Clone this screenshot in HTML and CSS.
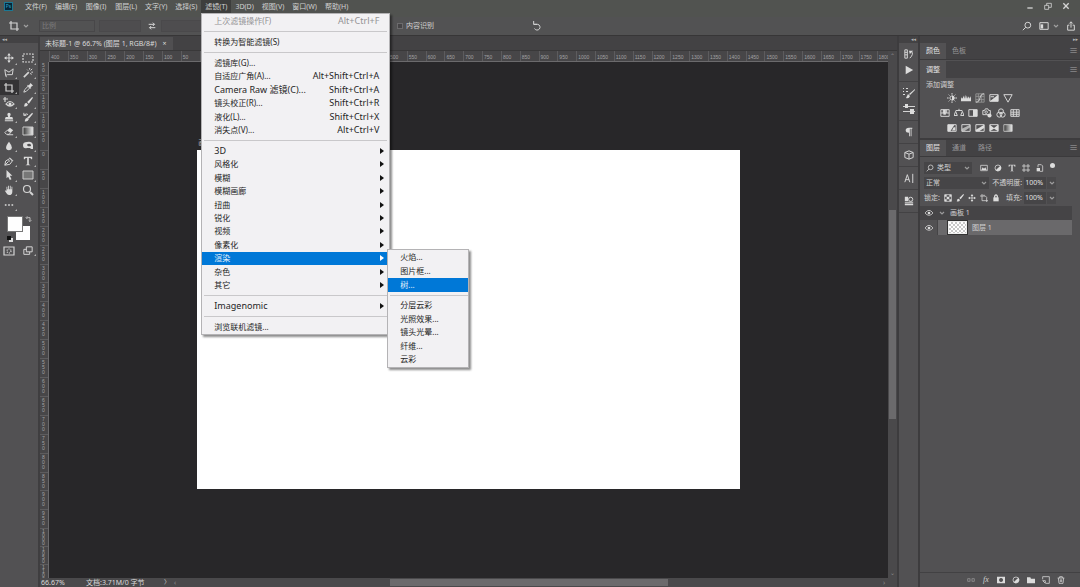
FILE: index.html
```html
<!DOCTYPE html>
<html lang="zh-CN">
<head>
<meta charset="utf-8">
<title>未标题-1</title>
<link rel="stylesheet" href="styles.css">
</head>
<body>
<svg class="sprite" aria-hidden="true">
  <symbol id="crop" viewBox="0 0 12 12"><path class="s" d="M3 1v8h8M1 3h8v8"/></symbol>
  <symbol id="chev" viewBox="0 0 6 6"><path class="s" d="M1 2l2 2 2-2"/></symbol>
  <symbol id="swap" viewBox="0 0 12 12"><path class="s" d="M2 4h7M7 2l2 2-2 2M10 8H3M5 6L3 8l2 2"/></symbol>
  <symbol id="undo" viewBox="0 0 12 12"><path class="s" d="M2 4h5a3.500 3.500 0 1 1-4 5M2 0v4h4"/></symbol>
  <symbol id="search" viewBox="0 0 12 12"><circle class="s" cx="7" cy="5" r="3.5"/><path class="s" d="M4.500 7.500L1 11"/></symbol>
  <symbol id="space" viewBox="0 0 12 12"><path class="s" d="M1 2h10v8H1z"/><path class="f" d="M2 4h3v5H2z"/></symbol>
  <symbol id="share" viewBox="0 0 12 12"><path class="s" d="M4 5H2v6h8V5H8M6 8V1M4 3l2-2 2 2"/></symbol>
  <symbol id="move" viewBox="0 0 12 12"><path class="s" d="M6 2v8M2 6h8"/><path class="f" d="M6 0l2 3H4zM6 12l2-3H4zM0 6l3-2v4zM12 6L9 4v4z"/></symbol>
  <symbol id="marquee" viewBox="0 0 12 12"><path class="s" stroke-dasharray="2 1" d="M1 2h10v8H1z"/></symbol>
  <symbol id="lasso" viewBox="0 0 12 12"><path class="s" d="M2 9L1 2l5 3 5-4-1 7H4l-2 1 1 2"/></symbol>
  <symbol id="wand" viewBox="0 0 12 12"><path class="b" d="M1 11l6-6"/><path class="s" d="M8 0v2M5 2l1 1M11 1L9 3M12 5h-2M9 6l1 2"/></symbol>
  <symbol id="dropper" viewBox="0 0 12 12"><path class="s" d="M1 11l1-3 4-4 2 2-4 4z"/><path class="f" d="M5 3l1-1 1 1 2-3 3 3-3 2 1 1-1 1z"/></symbol>
  <symbol id="heal" viewBox="0 0 12 12"><path class="s" d="M2 1v5M0 3h5M3 8q4-5 8 0-4 4-8 0z"/><circle class="f" cx="7" cy="8" r="1.500"/></symbol>
  <symbol id="brush" viewBox="0 0 12 12"><path class="f" d="M11 0l1 1-5 7-2-2zM4 7l2 2q-1 3-5 2 1-1 1-3z"/></symbol>
  <symbol id="stamp" viewBox="0 0 12 12"><path class="f" d="M6 1a2 2 0 0 1 2 2L7 6h3l1 3H1l1-3h3L4 3a2 2 0 0 1 2-2zM1 10h10v1H1z"/></symbol>
  <symbol id="history" viewBox="0 0 12 12"><path class="f" d="M11 1l1 1-5 6-2-1zM5 7l2 2q-2 3-5 2l1-3z"/><path class="s" d="M1 4q3-3 5-1M1 1v3h3"/></symbol>
  <symbol id="eraser" viewBox="0 0 12 12"><path class="f" d="M7 2l4 3-3 3-4-3z"/><path class="s" d="M4 5l4 3-2 2H3L1 8zM4 10.500h7"/></symbol>
  <symbol id="gradient" viewBox="0 0 12 12"><linearGradient id="lg"><stop stop-color="#333"/><stop offset="1" stop-color="#eee"/></linearGradient><path fill="url(#lg)" stroke="#ccc" d="M1 2h10v8H1z"/></symbol>
  <symbol id="drop" viewBox="0 0 12 12"><path class="f" d="M6 1q7 9 0 10-7-1 0-10z"/></symbol>
  <symbol id="dodge" viewBox="0 0 12 12"><path class="f" fill-rule="evenodd" d="M5 2q5-1 6 3v4H9L8 8H5Q1 9 1 5q0-3 4-3zM6 4a2 1 0 1 0 3 2 2 2 0 0 0-3-2z"/></symbol>
  <symbol id="pen" viewBox="0 0 12 12"><path class="s" d="M1 11l1-5 5-3 3 3-3 4zM7 2l4 4M1 11l4-4"/><circle class="f" cx="6" cy="6" r="1"/></symbol>
  <symbol id="type" viewBox="0 0 12 12"><path class="f" d="M1 1h10v3h-1q0-2-3-2v8l2 1H3l2-1V2Q2 2 2 4H1z"/></symbol>
  <symbol id="arrow" viewBox="0 0 12 12"><path class="f" d="M3 0l7 7H7l2 4-2 1-2-4-2 2z"/></symbol>
  <symbol id="rect" viewBox="0 0 12 12"><path fill="#777" stroke="#ccc" d="M1 2h10v8H1z"/></symbol>
  <symbol id="hand" viewBox="0 0 12 12"><path class="f" d="M3 7V2h1v3h1V1h1v4h1V1h1v4h1V2h1v6q0 4-4 4-2 0-3-2L1 7q0-1 2 0z"/></symbol>
  <symbol id="zoom" viewBox="0 0 12 12"><circle class="s" cx="5" cy="5" r="3.500"/><path class="b" d="M8 8l3 3"/></symbol>
  <symbol id="dots" viewBox="0 0 12 12"><path class="f" d="M1 5h2v2H1zM5 5h2v2H5zM9 5h2v2H9z"/></symbol>
  <symbol id="mask" viewBox="0 0 12 12"><path class="s" d="M1 2h10v8H1z"/><circle class="s" cx="6" cy="6" r="2" stroke-dasharray="1 1"/></symbol>
  <symbol id="screen" viewBox="0 0 12 12"><path class="s" d="M4 1h7v6H4zM4 4H1v6h7V7"/></symbol>
  <symbol id="corner" viewBox="0 0 12 12"><path class="s" d="M4 4h5v5M5 2L3 4l2 2M7 8l2 2 2-2"/></symbol>
  <symbol id="hist2" viewBox="0 0 12 12"><path class="s" d="M1 1h3v10H1zM1 4h3M1 7h3M7 11q5-5 2-8"/><path class="f" d="M6 2h5L7 6z"/></symbol>
  <symbol id="play" viewBox="0 0 12 12"><path class="f" d="M2 1l9 5-9 5z"/></symbol>
  <symbol id="brushes" viewBox="0 0 12 12"><path class="f" d="M12 2v1L7 8 6 7zM5 7l2 2q-1 3-4 2zM0 1h1v1H0zM3 1h2v1H3zM0 4h1v1H0zM3 4h2v1H3zM0 7h2v1H0z"/></symbol>
  <symbol id="sliders" viewBox="0 0 12 12"><path class="s" d="M0 3.500h12M0 8.500h12"/><path class="f" d="M2 1h3v4H2zM7 6h4v5H7z"/></symbol>
  <symbol id="para" viewBox="0 0 12 12"><path class="f" d="M10 1v1H9v9H8V2H7v9H6V7Q2 7 2 4t4-3z"/></symbol>
  <symbol id="cube" viewBox="0 0 12 12"><path class="s" d="M6 1l5 2v6l-5 2-5-2V3zM1 3l5 2 5-2M6 5v6"/></symbol>
  <symbol id="char" viewBox="0 0 12 12"><path class="s" d="M1 11l3-9 3 9M2 8h4M10.500 1v11"/></symbol>
  <symbol id="lib" viewBox="0 0 12 12"><path class="f" d="M1 1h4v5H1zM1 9h10v2H1z"/><circle class="s" cx="8" cy="4" r="2.500"/><path class="s" d="M1 7.500h10"/></symbol>
  <symbol id="sun" viewBox="0 0 12 12"><circle class="s" cx="6" cy="6" r="2.500"/><path class="f" d="M6 3a3 3 0 0 1 0 6z"/><path class="s" d="M6 0v2M6 10v2M0 6h2M10 6h2M2 2l1 1M9 9l1 1M10 2L9 3M3 9l-1 1"/></symbol>
  <symbol id="levels" viewBox="0 0 12 12"><path class="f" d="M0 10V7l1-2 1 2 1-4 1 4 1-5 1 5 1-4 1 4 1-3 1 3 1-3 1 2v4z"/></symbol>
  <symbol id="curves" viewBox="0 0 12 12"><path class="t" d="M1 1h10v10H1zM4 1v10M8 1v10M1 4h10M1 8h10"/><path class="s" d="M1 11q4 0 5-5t5-5"/></symbol>
  <symbol id="expo" viewBox="0 0 12 12"><path class="s" d="M1 2h10v8H1z"/><path class="f" d="M11 2v8H1zM2 4h4v1H2z"/></symbol>
  <symbol id="vib" viewBox="0 0 12 12"><path class="s" d="M1 2h10l-5 9z"/></symbol>
  <symbol id="hue" viewBox="0 0 12 12"><path class="s" d="M1 2h10v8H1zM1 6h10M4 2v4M8 2v4"/><path class="f" d="M4 2h3v6H4z"/></symbol>
  <symbol id="balance" viewBox="0 0 12 12"><path class="s" d="M6 1v2M2 3h8M0 9l2-5 2 5zM8 9l2-5 2 5z"/></symbol>
  <symbol id="bw" viewBox="0 0 12 12"><path class="s" d="M1 2h10v8H1z"/><path class="f" d="M6 2h5v8H6z"/></symbol>
  <symbol id="photo" viewBox="0 0 12 12"><path class="s" d="M1 3h2l1-2h3l1 2h2v5H1z"/><circle class="s" cx="5" cy="5" r="1.500"/><circle class="f" cx="9" cy="9" r="2.500"/></symbol>
  <symbol id="mixer" viewBox="0 0 12 12"><circle class="s" cx="6" cy="4" r="3"/><circle class="s" cx="4" cy="8" r="3"/><circle class="s" cx="8" cy="8" r="3"/></symbol>
  <symbol id="lut" viewBox="0 0 12 12"><path class="s" d="M1 2h10v8H1zM4 2v8M8 2v8M1 5h10M1 7.500h10"/></symbol>
  <symbol id="invert" viewBox="0 0 12 12"><path class="s" d="M1 2h10v8H1z"/><path class="f" d="M1 2h8L4 10H1zM8 5h2v4H6z"/></symbol>
  <symbol id="poster" viewBox="0 0 12 12"><path class="s" d="M1 2h10v8H1z"/><path class="f" opacity=".7" d="M1 7l10-5v3L4 10H1z"/></symbol>
  <symbol id="thresh" viewBox="0 0 12 12"><path class="s" d="M1 2h10v8H1z"/><path class="f" d="M1 8l10-6v4L5 10H1z"/></symbol>
  <symbol id="select" viewBox="0 0 12 12"><path class="s" d="M1 2h10v8H1z"/><path class="f" d="M1 2l5 4 5-4v8L6 7l-5 3z"/></symbol>
  <symbol id="image" viewBox="0 0 12 12"><path class="s" d="M1 2h10v8H1z"/><path class="f" d="M2 9l2-4 2 2 2-2 2 4z"/></symbol>
  <symbol id="half" viewBox="0 0 12 12"><circle class="s" cx="6" cy="6" r="4.500"/><path class="f" d="M9.500 2.500a5 5 0 0 1-7 7z"/></symbol>
  <symbol id="shape" viewBox="0 0 12 12"><path class="s" d="M3 0v12M9 0v12M0 3h12M0 9h12"/></symbol>
  <symbol id="smart" viewBox="0 0 12 12"><path class="s" d="M3 5V1h5l2 2v8H6"/><path class="f" d="M1 6h5v5H1z"/></symbol>
  <symbol id="checker" viewBox="0 0 12 12"><path class="s" d="M1 1h10v10H1z"/><path class="f" d="M1 1h3v3H1zM8 1h3v3H8zM4 4h4v4H4zM1 8h3v3H1zM8 8h3v3H8z"/></symbol>
  <symbol id="board" viewBox="0 0 12 12"><path class="s" d="M3 0v10h9M0 3h8l2 2v7M6 3V1"/></symbol>
  <symbol id="lock" viewBox="0 0 12 12"><path class="f" d="M2 5h8v6H2z"/><path class="b" d="M4 6V3q2-3 4 0v3"/></symbol>
  <symbol id="eye" viewBox="0 0 12 12"><path class="s" d="M0 6q6-8 12 0-6 7-12 0z"/><circle class="f" cx="6" cy="6" r="2"/></symbol>
  <symbol id="link" viewBox="0 0 12 12"><path class="s" d="M5 4H1v4h4M7 4h4v4H7M3 6h6"/></symbol>
  <symbol id="addmask" viewBox="0 0 12 12"><path class="f" fill-rule="evenodd" d="M0 1h12v10H0zM6 3a3 3 0 1 0 .1 0z"/></symbol>
  <symbol id="folder" viewBox="0 0 12 12"><path class="f" d="M0 2h5l1 2h6v7H0z"/></symbol>
  <symbol id="new" viewBox="0 0 12 12"><path class="s" d="M1 5V1h10v10H6M1 7h4v4z"/></symbol>
  <symbol id="trash" viewBox="0 0 12 12"><path class="s" d="M1 3h10M4 3V1h4v2M2 3l1 8h6l1-8M5 5v4M7 5v4"/></symbol>
  <symbol id="min" viewBox="0 0 12 12"><path class="b" d="M2 9h8"/></symbol>
  <symbol id="restore" viewBox="0 0 12 12"><path class="s" d="M1 5h6v6H1zM4 5V2h7v6H7"/></symbol>
  <symbol id="close" viewBox="0 0 12 12"><path class="b" d="M2 2l8 8M10 2l-8 8"/></symbol>
</svg>

<header class="menubar">
  <span class="logo">Ps</span>
  <nav class="menus">
    <button class="menu">文件(F)</button>
    <button class="menu">编辑(E)</button>
    <button class="menu">图像(I)</button>
    <button class="menu">图层(L)</button>
    <button class="menu">文字(Y)</button>
    <button class="menu">选择(S)</button>
    <div class="menu-open">
      <button class="menu on">滤镜(T)</button>
      <div class="dropdown">
        <div class="group"><button class="item disabled" disabled>上次滤镜操作(F)<kbd>Alt+Ctrl+F</kbd></button></div>
        <div class="group"><button class="item">转换为智能滤镜(S)</button></div>
        <div class="group six">
          <button class="item">滤镜库(G)...</button>
          <button class="item">自适应广角(A)...<kbd>Alt+Shift+Ctrl+A</kbd></button>
          <button class="item latin">Camera Raw 滤镜(C)...<kbd>Shift+Ctrl+A</kbd></button>
          <button class="item">镜头校正(R)...<kbd>Shift+Ctrl+R</kbd></button>
          <button class="item">液化(L)...<kbd>Shift+Ctrl+X</kbd></button>
          <button class="item">消失点(V)...<kbd>Alt+Ctrl+V</kbd></button>
        </div>
        <div class="group eleven">
          <button class="item more latin">3D</button>
          <button class="item more">风格化</button>
          <button class="item more">模糊</button>
          <button class="item more">模糊画廊</button>
          <button class="item more">扭曲</button>
          <button class="item more">锐化</button>
          <button class="item more">视频</button>
          <button class="item more">像素化</button>
          <div class="parent">
            <button class="item more chosen">渲染</button>
            <div class="dropdown submenu">
              <div class="group three">
                <button class="item">火焰...</button>
                <button class="item">图片框...</button>
                <button class="item chosen">树...</button>
              </div>
              <div class="group five">
                <button class="item">分层云彩</button>
                <button class="item">光照效果...</button>
                <button class="item">镜头光晕...</button>
                <button class="item">纤维...</button>
                <button class="item">云彩</button>
              </div>
            </div>
          </div>
          <button class="item more">杂色</button>
          <button class="item more">其它</button>
        </div>
        <div class="group"><button class="item more latin">Imagenomic</button></div>
        <div class="group"><button class="item">浏览联机滤镜...</button></div>
      </div>
    </div>
    <button class="menu">3D(D)</button>
    <button class="menu">视图(V)</button>
    <button class="menu">窗口(W)</button>
    <button class="menu">帮助(H)</button>
  </nav>
  <div class="window-buttons">
    <button aria-label="最小化"><svg class="i8"><use href="#min"/></svg></button>
    <button aria-label="还原"><svg class="i8"><use href="#restore"/></svg></button>
    <button aria-label="关闭"><svg class="i8"><use href="#close"/></svg></button>
  </div>
</header>

<div class="options">
  <div class="opt-left">
    <button class="tool-pick" aria-label="裁剪工具"><svg class="i12"><use href="#crop"/></svg><svg class="i6"><use href="#chev"/></svg></button>
    <select class="ratio" aria-label="比例"><option>比例</option></select>
    <input class="size" aria-label="宽度">
    <button aria-label="交换"><svg class="i10"><use href="#swap"/></svg></button>
    <input class="size" aria-label="高度">
  </div>
  <div class="opt-mid">
    <label class="check"><input type="checkbox">内容识别</label>
    <button aria-label="复位"><svg class="i10"><use href="#undo"/></svg></button>
  </div>
  <div class="opt-right">
    <button aria-label="搜索"><svg class="i10"><use href="#search"/></svg></button>
    <button aria-label="工作区"><svg class="i10"><use href="#space"/></svg><svg class="i6"><use href="#chev"/></svg></button>
    <button aria-label="共享"><svg class="i10"><use href="#share"/></svg></button>
  </div>
</div>

<main class="app">
  <aside class="toolbar">
    <div class="strip">◂◂</div>
    <div class="tools">
      <button aria-label="移动"><svg class="i10"><use href="#move"/></svg></button><button aria-label="选框"><svg class="i12"><use href="#marquee"/></svg></button>
      <button aria-label="套索"><svg class="i10"><use href="#lasso"/></svg></button><button aria-label="魔棒"><svg class="i10"><use href="#wand"/></svg></button>
      <button class="on" aria-label="裁剪"><svg class="i12"><use href="#crop"/></svg></button><button aria-label="吸管"><svg class="i10"><use href="#dropper"/></svg></button>
      <button aria-label="修复"><svg class="i12"><use href="#heal"/></svg></button><button aria-label="画笔"><svg class="i10"><use href="#brush"/></svg></button>
      <button aria-label="图章"><svg class="i10"><use href="#stamp"/></svg></button><button aria-label="历史画笔"><svg class="i10"><use href="#history"/></svg></button>
      <button aria-label="橡皮擦"><svg class="i10"><use href="#eraser"/></svg></button><button aria-label="渐变"><svg class="i12"><use href="#gradient"/></svg></button>
      <button aria-label="模糊"><svg class="i10"><use href="#drop"/></svg></button><button aria-label="减淡"><svg class="i12"><use href="#dodge"/></svg></button>
      <button aria-label="钢笔"><svg class="i10"><use href="#pen"/></svg></button><button aria-label="文字"><svg class="i10"><use href="#type"/></svg></button>
      <button aria-label="路径选择"><svg class="i10"><use href="#arrow"/></svg></button><button aria-label="矩形"><svg class="i12"><use href="#rect"/></svg></button>
      <button aria-label="抓手"><svg class="i10"><use href="#hand"/></svg></button><button class="plain" aria-label="缩放"><svg class="i12"><use href="#zoom"/></svg></button>
      <button aria-label="更多"><svg class="i10"><use href="#dots"/></svg></button>
    </div>
    <div class="swatches">
      <button class="sw back" aria-label="背景色"></button>
      <button class="sw fore" aria-label="前景色"></button>
      <button class="sw-swap" aria-label="切换颜色"><svg class="i8"><use href="#corner"/></svg></button>
      <button class="sw-reset" aria-label="默认颜色"></button>
    </div>
    <div class="modes">
      <button class="plain" aria-label="快速蒙版"><svg class="i12"><use href="#mask"/></svg></button><button aria-label="屏幕模式"><svg class="i10"><use href="#screen"/></svg></button>
    </div>
  </aside>

  <section class="doc">
    <div class="tabs"><div class="tab">未标题-1 @ 66.7% (图层 1, RGB/8#)<button aria-label="关闭文档">×</button></div></div>
    <div class="stage">
      <div class="ruler-corner"></div>
      <div class="ruler-h"><span>400</span><span>350</span><span>300</span><span>250</span><span>200</span><span>150</span><span>100</span><span>50</span><span>0</span><span>50</span><span>100</span><span>150</span><span>200</span><span>250</span><span>300</span><span>350</span><span>400</span><span>450</span><span>500</span><span>550</span><span>600</span><span>650</span><span>700</span><span>750</span><span>800</span><span>850</span><span>900</span><span>950</span><span>1000</span><span>1050</span><span>1100</span><span>1150</span><span>1200</span><span>1250</span><span>1300</span><span>1350</span><span>1400</span><span>1450</span><span>1500</span><span>1550</span><span>1600</span><span>1650</span><span>1700</span><span>1750</span><span class="part">1800</span></div>
      <div class="vscroll"><span>⌃</span><i></i><span>⌄</span></div>
      <div class="ruler-v"><span class="first">50</span><span>200</span><span>150</span><span>100</span><span>50</span><span>0</span><span>50</span><span>100</span><span>150</span><span>200</span><span>250</span><span>300</span><span>350</span><span>400</span><span>450</span><span>500</span><span>550</span><span>600</span><span>650</span><span>700</span><span>750</span><span>800</span><span>850</span><span>900</span><span>950</span><span class="four">1000</span><span class="four">1050</span><span class="four last">1100</span></div>
      <div class="canvas"><span class="board-name">画板 1</span><div class="paper"></div></div>
    </div>
    <footer class="status"><span class="pct">66.67%</span><span class="size-info">文档:3.71M/0 字节</span><button aria-label="状态菜单">〉</button><span class="arrow">‹</span><div class="htrack"><i></i></div><span class="arrow">›</span></footer>
  </section>

  <aside class="dock">
    <div class="strip right">◂◂</div>
    <div class="dock-group"><button aria-label="历史记录"><svg class="i10"><use href="#hist2"/></svg></button><button aria-label="动作"><svg class="i10"><use href="#play"/></svg></button></div>
    <div class="dock-group"><button aria-label="画笔预设"><svg class="i12"><use href="#brushes"/></svg></button><button aria-label="画笔设置"><svg class="i12"><use href="#sliders"/></svg></button></div>
    <div class="dock-group"><button aria-label="段落"><svg class="i10"><use href="#para"/></svg></button></div>
    <div class="dock-group"><button aria-label="3D"><svg class="i10"><use href="#cube"/></svg></button></div>
    <div class="dock-group"><button aria-label="字符"><svg class="i10"><use href="#char"/></svg></button></div>
    <div class="dock-group"><button aria-label="库"><svg class="i10"><use href="#lib"/></svg></button></div>
  </aside>

  <aside class="panels">
    <div class="strip right">▸▸</div>
    <div class="ptabs"><button class="on">颜色</button><button>色板</button><span class="burger">≡</span></div>
    <div class="ptabs"><button class="on">调整</button><span class="burger">≡</span></div>
    <section class="adjust">
      <p>添加调整</p>
      <div class="adj-row"><button aria-label="亮度"><svg class="i10"><use href="#sun"/></svg></button><button aria-label="色阶"><svg class="i10"><use href="#levels"/></svg></button><button aria-label="曲线"><svg class="i10"><use href="#curves"/></svg></button><button aria-label="曝光度"><svg class="i10"><use href="#expo"/></svg></button><button aria-label="自然饱和度"><svg class="i10"><use href="#vib"/></svg></button></div>
      <div class="adj-row"><button aria-label="色相"><svg class="i10"><use href="#hue"/></svg></button><button aria-label="色彩平衡"><svg class="i10"><use href="#balance"/></svg></button><button aria-label="黑白"><svg class="i10"><use href="#bw"/></svg></button><button aria-label="照片滤镜"><svg class="i10"><use href="#photo"/></svg></button><button aria-label="通道混合器"><svg class="i10"><use href="#mixer"/></svg></button><button aria-label="颜色查找"><svg class="i10"><use href="#lut"/></svg></button></div>
      <div class="adj-row"><button aria-label="反相"><svg class="i10"><use href="#invert"/></svg></button><button aria-label="色调分离"><svg class="i10"><use href="#poster"/></svg></button><button aria-label="阈值"><svg class="i10"><use href="#thresh"/></svg></button><button aria-label="可选颜色"><svg class="i10"><use href="#select"/></svg></button><button aria-label="渐变映射"><svg class="i10"><use href="#gradient"/></svg></button></div>
    </section>
    <div class="ptabs"><button class="on">图层</button><button>通道</button><button>路径</button><span class="burger">≡</span></div>
    <section class="layers">
      <div class="row filter">
        <div class="pick kind"><svg class="i8"><use href="#search"/></svg><select aria-label="类型"><option>类型</option></select><svg class="i6"><use href="#chev"/></svg></div>
        <div class="icons wide"><button aria-label="像素"><svg class="i8"><use href="#image"/></svg></button><button aria-label="调整"><svg class="i8"><use href="#half"/></svg></button><button aria-label="文字"><svg class="i8"><use href="#type"/></svg></button><button aria-label="形状"><svg class="i8"><use href="#shape"/></svg></button><button aria-label="智能对象"><svg class="i8"><use href="#smart"/></svg></button><button class="dot" aria-label="过滤开关"></button></div>
      </div>
      <div class="row">
        <div class="pick blend"><select aria-label="混合模式"><option>正常</option></select><svg class="i6"><use href="#chev"/></svg></div>
        <label class="amount">不透明度:<input value="100%"></label><button class="drop-btn" aria-label="不透明度滑块"><svg class="i6"><use href="#chev"/></svg></button>
      </div>
      <div class="row">
        <span class="lock-label">锁定:</span>
        <div class="icons"><button aria-label="透明像素"><svg class="i8"><use href="#checker"/></svg></button><button aria-label="图像像素"><svg class="i8"><use href="#brush"/></svg></button><button aria-label="位置"><svg class="i8"><use href="#move"/></svg></button><button aria-label="画板"><svg class="i8"><use href="#board"/></svg></button><button aria-label="全部"><svg class="i8"><use href="#lock"/></svg></button></div>
        <label class="amount">填充:<input value="100%"></label><button class="drop-btn" aria-label="填充滑块"><svg class="i6"><use href="#chev"/></svg></button>
      </div>
      <div class="layer parent-layer"><button class="vis" aria-label="可见性"><svg class="i8"><use href="#eye"/></svg></button><div class="name"><svg class="i6"><use href="#chev"/></svg>画板 1</div></div>
      <div class="layer"><button class="vis" aria-label="可见性"><svg class="i8"><use href="#eye"/></svg></button><div class="name picked"><span class="thumb"></span>图层 1</div></div>
    </section>
    <footer class="layer-tools"><button class="dim" aria-label="链接"><svg class="i8"><use href="#link"/></svg></button><button class="fx" aria-label="图层样式">fx</button><button aria-label="蒙版"><svg class="i8"><use href="#addmask"/></svg></button><button aria-label="调整图层"><svg class="i8"><use href="#half"/></svg></button><button aria-label="组"><svg class="i8"><use href="#folder"/></svg></button><button aria-label="新建"><svg class="i8"><use href="#new"/></svg></button><button aria-label="删除"><svg class="i8"><use href="#trash"/></svg></button></footer>
  </aside>
</main>
</body>
</html>
```
FILE: styles.css
```css
* { box-sizing: border-box; }
html, body { margin: 0; }
body {
  height: 100vh;
  display: flex;
  flex-direction: column;
  overflow: hidden;
  background: #525153;
  color: #d2d2d2;
  font: 7px/10px "Noto Sans", "Noto Sans CJK SC", sans-serif;
  white-space: nowrap;
}
button, input, select { margin: 0; padding: 0; border: 0; background: none; color: inherit; font: inherit; border-radius: 0; }
button { display: flex; align-items: center; justify-content: center; }
select { appearance: none; }
svg { display: block; flex: none; }
.sprite { position: absolute; width: 0; height: 0; }
.s, .b, .t { fill: none; stroke: #d4d4d4; stroke-width: 1.2; }
.b { stroke-width: 2; }
.t { stroke: #999; stroke-width: 1; }
.f { fill: #dcdcdc; }
.i6 { width: 6px; height: 6px; opacity: .6; }
.i8 { width: 8px; height: 8px; }
.i10 { width: 10px; height: 10px; }
.i12 { width: 12px; height: 12px; }

/* Menu bar */
.menubar { display: flex; height: 17px; background: #515350; flex: none; align-items: flex-start; }
.logo { width: 9px; height: 9px; margin: 2px 8px 0 4px; background: #06263a; border: 1px solid #1b7894; color: #2ba8cc; font-size: 5px; line-height: 7px; text-align: center; }
.menus { display: flex; }
.menu { height: 13px; padding: 0 4px; }
.menu:nth-child(-n+6) { min-width: 30px; }
.menu.on { background: #3d3e3d; }
.menu-open { position: relative; }
.window-buttons { display: flex; gap: 10px; margin: 2px 10px 0 auto; }

.dropdown {
  position: absolute;
  z-index: 5;
  top: 100%;
  left: 0;
  width: 189px;
  padding: 0 2px 0 0;
  border: 1px solid #b4b3b5;
  background: #f2f1f3;
  color: #242424;
  font-size: 8px;
  box-shadow: 2px 2px 2px rgba(0, 0, 0, .45);
}
.group { display: grid; grid-auto-rows: 1fr; height: 14px; }
.group + .group { margin-top: 7px; position: relative; }
.group + .group::before { content: ""; position: absolute; top: -4px; left: 2px; right: 0; height: 1px; background: #c9c8ca; }
.six { height: 81px; }
.eleven { height: 148px; }
.three { height: 41px; }
.five { height: 67px; }
.item { width: 100%; min-height: 0; padding: 0 8px 0 12px; justify-content: flex-start; position: relative; line-height: 12px; }
.parent > .item { height: 100%; }
.item kbd { margin-left: auto; font: inherit; font-size: 9px; }
.latin { font-size: 9px; }
.disabled { color: #929193; }
.more::after { content: ""; margin-left: auto; margin-right: -5px; border-left: 4px solid #111; border-top: 3px solid transparent; border-bottom: 3px solid transparent; }
.chosen { background: #0078d7; color: #e6f2fc; }
.chosen.more::after { border-left-color: #fff; }
.parent { position: relative; min-height: 0; }
.submenu { top: -3px; left: 100%; width: 82px; padding: 1px 0; }

/* Options bar */
.options { display: grid; grid-template-columns: 397px 1fr auto; align-items: center; height: 19px; flex: none; border-bottom: 1px solid #373637; background: #525253; }
.opt-left, .opt-mid, .opt-right, .tool-pick { display: flex; align-items: center; }
.opt-left { padding-left: 8px; gap: 4px; }
.tool-pick { gap: 3px; margin-right: 6px; }
.ratio { width: 56px; height: 12px; padding-left: 2px; border: 1px solid #484749; color: #7d7c7e; }
.size { width: 42px; height: 12px; border: 1px solid #4a494b; background: #4e4d4f; margin-right: 2px; }
.opt-mid { gap: 98px; }
.check { display: flex; align-items: center; gap: 3px; }
.check input { appearance: none; width: 6px; height: 6px; border: 1px solid #6c6b6d; background: #454446; }
.opt-right { gap: 7px; padding-right: 4px; }
.opt-right button { gap: 4px; }

/* Main area */
.app { flex: 1; min-height: 0; display: grid; grid-template-columns: 40px minmax(0, 1fr) 23px 160px; }
.strip { height: 7px; padding: 0 2px; background: #434244; color: #b4b4b4; font: 5px/7px "DejaVu Sans", sans-serif; }
.strip.right { text-align: right; }
.toolbar { background: #525153; border-right: 2px solid #3f3e40; }
.tools { display: grid; grid-template-columns: 19px 19px; grid-auto-rows: 1fr; height: 161px; margin-top: 8px; }
.tools button, .modes button { position: relative; padding-right: 2px; min-height: 0; }
.tools button::after, .modes button::after { content: ""; position: absolute; right: 2px; bottom: 1px; border-left: 2px solid transparent; border-bottom: 2px solid #b0b0b0; }
.tools .plain::after, .modes .plain::after { display: none; }
.tools .on { background: #343335; }
.swatches { position: relative; height: 33px; }
.swatches button { position: absolute; }
.sw { width: 14px; height: 14px; background: #fefefe; }
.fore { left: 8px; top: 5px; box-shadow: 0 0 0 1px #777; }
.back { left: 16px; top: 14px; }
.sw-swap { left: 24px; top: 3px; }
.sw-reset { left: 7px; top: 24px; width: 4px; height: 4px; background: #111; box-shadow: 2px 2px 0 #ddd; }
.modes { display: grid; grid-template-columns: 19px 19px; height: 12px; }

.doc { display: flex; flex-direction: column; min-width: 0; background: #434244; }
.tabs { display: flex; height: 15px; padding-top: 1px; flex: none; border-bottom: 1px solid #393839; }
.tab { display: flex; align-items: center; gap: 6px; padding: 0 6px 0 5px; background: #504f51; color: #dadada; }
.stage { flex: 1; min-height: 0; display: grid; grid-template-columns: 9px minmax(0, 1fr) 9px; grid-template-rows: 11px minmax(0, 1fr); }
.ruler-corner, .ruler-h, .ruler-v { background: #474648; color: #a3a2a4; font: 5px/7px "Liberation Sans", sans-serif; }
.ruler-h { display: flex; overflow: hidden; border-bottom: 1px solid #6b6a6c; }
.ruler-h span { flex: 50 1 0; min-width: 0; padding: 3px 0 0 1px; border-left: 1px solid #5d5c5e; }
.ruler-h .part { flex-grow: 29; padding-left: 0; }
.ruler-v { display: flex; flex-direction: column; overflow: hidden; border-right: 1px solid #6b6a6c; line-height: 5px; }
.ruler-v span { flex: 50 1 0; min-height: 0; width: 8px; padding: 1px 3px 0 2px; border-top: 1px solid #5d5c5e; white-space: normal; word-break: break-all; }
.ruler-v .first { flex-grow: 34; border: 0; }
.ruler-v .last { flex-grow: 38; }
.ruler-v .four { line-height: 4px; padding-top: 0; }
.canvas { display: grid; grid-template-columns: 148fr 542fr 148fr; grid-template-rows: 88fr 339fr 89fr; background: #282729; }
.board-name { grid-area: 1 / 2; align-self: end; color: #b5b5b5; padding-bottom: 2px; padding-left: 1px; }
.paper { grid-area: 2 / 2; background: #fff; }
.vscroll { grid-area: 1 / 3 / 3 / 4; display: grid; grid-template-rows: 10px 149fr 209fr 149fr 10px; background: #4a494b; color: #8a898b; font-size: 6px; text-align: center; }
.vscroll i { grid-row: 3; margin: 0 1px; background: #6b6a6c; }
.vscroll span:last-child { grid-row: 5; }
.status { display: flex; align-items: center; height: 9px; flex: none; padding: 0 9px 0 1px; background: #4a494b; line-height: 9px; color: #dadada; }
.pct { width: 45px; }
.size-info { width: 78px; }
.status button { width: 6px; margin-right: 4px; font-size: 6px; }
.arrow { width: 5px; color: #8a898b; }
.htrack { flex: 1; height: 7px; display: grid; grid-template-columns: 211fr 277fr 215fr; }
.htrack i { grid-column: 2; background: #6b6a6c; }

/* Collapsed dock */
.dock { background: #525153; border-left: 2px solid #3d3c3e; border-right: 2px solid #3d3c3e; }
.dock-group { padding: 3px 0; border-bottom: 1px solid #434244; }
.dock-group button { width: 100%; height: 16px; }
.dock-group:first-of-type { padding-top: 5px; }

/* Panels */
.panels { display: flex; flex-direction: column; min-width: 0; }
.ptabs { display: flex; height: 17px; flex: none; background: #434244; border-bottom: 1px solid #3b3a3c; padding-right: 2px; }
.ptabs + .ptabs { margin-top: 1px; border-bottom: 0; }
.ptabs button { padding: 0 6px; color: #989799; }
.ptabs .on { background: #525153; color: #e4e4e4; }
.burger { margin-left: auto; align-self: center; font-size: 9px; color: #a5a4a6; }
.adjust { padding: 2px 6px 5px; border-bottom: 2px solid #3d3c3e; display: flex; flex-direction: column; gap: 5px; }
.adjust p { margin: 0; height: 8px; }
.adj-row { display: flex; gap: 4px; justify-content: center; padding-right: 40px; }
.layers { flex: 1; padding-top: 3px; }
.row { display: flex; align-items: center; height: 15px; padding-left: 4px; }
.pick { display: flex; align-items: center; height: 12px; padding: 0 2px; background: #464547; }
.pick select { flex: 1; min-width: 0; height: 12px; }
.kind { width: 48px; gap: 3px; }
.blend { width: 67px; margin-right: 3px; }
.icons { display: flex; align-items: center; gap: 4px; }
.wide { gap: 6px; padding-left: 8px; }
.dot { width: 5px; height: 5px; border-radius: 50%; background: #ddd; margin-bottom: 4px; }
.lock-label { width: 20px; }
.amount { display: flex; align-items: center; gap: 2px; margin-left: auto; }
.amount input { width: 22px; height: 12px; background: #464547; color: #e0e0e0; padding-left: 1px; }
.drop-btn { width: 9px; height: 12px; margin-left: 1px; margin-right: 24px; background: #4a494b; }
.layer { display: flex; height: 15px; margin-right: 8px; }
.layer.parent-layer { background: #454446; margin-top: 1px; height: 14px; }
.vis { width: 17px; }
.name { flex: 1; display: flex; align-items: center; gap: 5px; padding-left: 1px; border-left: 1px solid #454446; }
.picked { background: #6a696b; padding-left: 10px; }
.thumb { width: 19px; height: 13px; border: 1px solid #eee; outline: 1px solid #333; background: repeating-conic-gradient(#c8c8c8 0 25%, #fff 0 50%) 0 0 / 4px 4px; }
.layer-tools { display: flex; align-items: center; justify-content: flex-end; gap: 7px; height: 15px; flex: none; padding-right: 15px; border-top: 1px solid #424143; }
.fx { font: italic 8px/8px "Liberation Serif", serif; width: 8px; }
.dim { opacity: .5; }
```
